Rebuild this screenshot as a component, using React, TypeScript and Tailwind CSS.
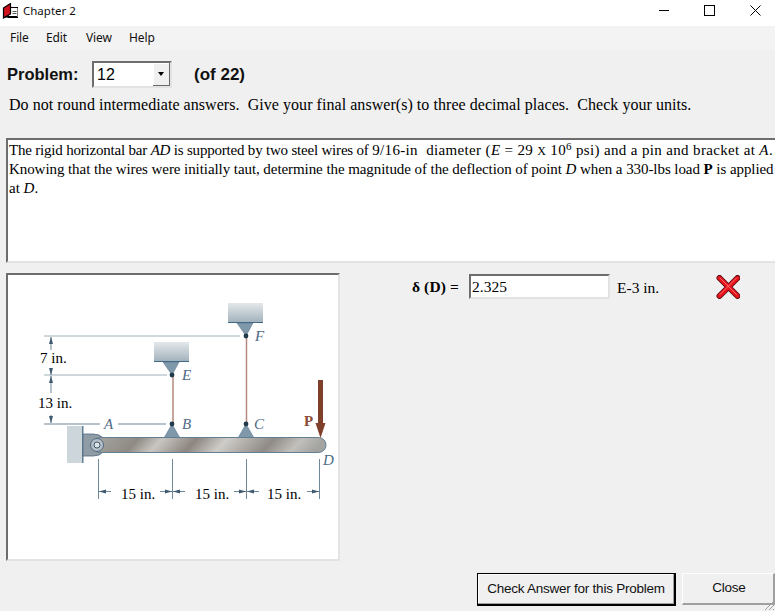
import React from "react";

const serif = "[font-family:'Liberation_Serif',serif]";

function Diagram() {
  const serifFont = "'Liberation Serif', serif";
  const line = "#9fb0b8";
  const dim = "#6f8797";
  const label = "#4f6a85";
  const Block = ({ x, y }: { x: number; y: number }) => (
    <g>
      <rect x={x} y={y} width={35} height={19} fill="url(#blk)" />
      <rect x={x} y={y + 19} width={35} height={1} fill="#3f6a85" />
      <polygon points={`${x + 9},${y + 20} ${x + 25},${y + 20} ${x + 18},${y + 33}`} fill="#7f98aa" stroke="#4f6a85" strokeWidth={0.5} />
      <circle cx={x + 18} cy={y + 33} r={2.4} fill="#1e3a4c" />
    </g>
  );
  const Base = ({ x }: { x: number }) => (
    <g>
      <polygon points={`${x},424 ${x - 8},438 ${x + 8},438`} fill="#7f98aa" stroke="#4f6a85" strokeWidth={0.5} />
      <circle cx={x} cy={424} r={2.4} fill="#1e3a4c" />
    </g>
  );
  const ArrowH = ({ x, dir }: { x: number; dir: 1 | -1 }) => (
    <g>
      <line x1={x} y1={491.5} x2={x + dir * 12} y2={491.5} stroke={dim} strokeWidth={1} />
      <polygon points={`${x},491.5 ${x + dir * 7},489.5 ${x + dir * 7},493.5`} fill="#3f5a70" />
    </g>
  );
  const ArrowV = ({ y, dir, len }: { y: number; dir: 1 | -1; len: number }) => (
    <g>
      <line x1={51} y1={y} x2={51} y2={y + dir * len} stroke={dim} strokeWidth={1} />
      <polygon points={`51,${y} 49,${y + dir * 7} 53,${y + dir * 7}`} fill="#3f5a70" />
    </g>
  );
  return (
    <svg viewBox="8 275 330 284" className="block w-[330px] h-[284px]">
      <defs>
        <linearGradient id="blk" x1="0" y1="0" x2="0" y2="1">
          <stop offset="0" stopColor="#e4e8ea" />
          <stop offset="1" stopColor="#a3b3bd" />
        </linearGradient>
        <linearGradient id="bar" x1="0" y1="0" x2="1" y2="0.06">
          <stop offset="0" stopColor="#a8a8a4" />
          <stop offset="0.2" stopColor="#8f8a84" />
          <stop offset="0.3" stopColor="#c9c6c1" />
          <stop offset="0.45" stopColor="#8d8580" />
          <stop offset="0.58" stopColor="#cfcdc9" />
          <stop offset="0.78" stopColor="#8f8a86" />
          <stop offset="0.9" stopColor="#c2c0bc" />
          <stop offset="1" stopColor="#a3a3a0" />
        </linearGradient>
      </defs>

      <line x1={44} y1={336} x2={240} y2={336} stroke={line} strokeWidth={1} />
      <line x1={44} y1={375} x2={167} y2={375} stroke={line} strokeWidth={1} />
      <line x1={44} y1={424} x2={100} y2={424} stroke={dim} strokeWidth={1} />
      <line x1={118} y1={424} x2={166} y2={424} stroke={dim} strokeWidth={1} />

      <ArrowV y={337} dir={1} len={13} />
      <ArrowV y={375} dir={-1} len={5} />
      <ArrowV y={376} dir={1} len={17} />
      <ArrowV y={423} dir={-1} len={8} />

      <text x={40} y={363} fontFamily={serifFont} fontSize={15} fill="#000">7 in.</text>
      <text x={38} y={408} fontFamily={serifFont} fontSize={15} fill="#000">13 in.</text>

      <line x1={173} y1={375} x2={173} y2={424} stroke="#b58a7c" strokeWidth={1.5} />
      <line x1={246.5} y1={336} x2={246.5} y2={424} stroke="#b58a7c" strokeWidth={1.5} />

      <Block x={154} y={342} />
      <Block x={228} y={303} />
      <Base x={172} />
      <Base x={246} />

      <rect x={67} y={426} width={16} height={37} fill="#cdd6da" />
      <rect x={82} y={426} width={1.5} height={37} fill="#5f8096" />
      <path d="M83 434 H93 Q100 434 103 438 V452 Q100 456 93 456 H83 Z" fill="#8f9ca5" stroke="#4f6a85" strokeWidth={0.8} />
      <rect x={93} y={437.5} width={233} height={15} rx={7.5} fill="url(#bar)" stroke="#5f7f95" strokeWidth={1} />
      <circle cx={97} cy={445} r={6.5} fill="#b4bec4" stroke="#4f6a85" strokeWidth={1} />
      <circle cx={97} cy={445} r={3} fill="#dfe4e6" stroke="#3f5a70" strokeWidth={1} />

      <rect x={318} y={380} width={5} height={43} fill="#7e3f2b" />
      <polygon points="315.5,423 325.5,423 320.5,438" fill="#7e3f2b" />

      <text x={304} y={426} fontFamily={serifFont} fontSize={15} fontWeight={700} fill="#8a4a36">P</text>
      <g fontFamily={serifFont} fontSize={15} fontStyle="italic" fill={label}>
        <text x={104} y={429}>A</text>
        <text x={182} y={429}>B</text>
        <text x={254} y={429}>C</text>
        <text x={182} y={380}>E</text>
        <text x={255} y={341}>F</text>
        <text x={323} y={465}>D</text>
      </g>

      {[98.5, 172.5, 246.5, 319.5].map((x) => (
        <line key={x} x1={x} y1={459} x2={x} y2={499} stroke={dim} strokeWidth={1} />
      ))}
      <ArrowH x={99} dir={1} />
      <ArrowH x={172} dir={-1} />
      <ArrowH x={173} dir={1} />
      <ArrowH x={246} dir={-1} />
      <ArrowH x={247} dir={1} />
      <ArrowH x={319} dir={-1} />
      <g fontFamily={serifFont} fontSize={15} fill="#000">
        <text x={121} y={499}>15 in.</text>
        <text x={195} y={499}>15 in.</text>
        <text x={267} y={499}>15 in.</text>
      </g>
    </svg>
  );
}

export default function App() {
  return (
    <div className="relative w-[775px] h-[611px] overflow-hidden bg-[#f0f0f0] flex flex-col text-black">
      <div className="h-[26px] bg-white flex items-center justify-between shrink-0">
        <div className="flex items-center pl-[2px] gap-[5px] pb-[4px]">
          <svg width="16" height="16" viewBox="0 0 16 16" className="block">
            <rect x="6" y="4.5" width="10" height="10" fill="#fff" stroke="#000" />
            <path d="M1.5 5 L8.5 0.5 V11 L1.5 15 Z" fill="#d0101c" stroke="#000" strokeWidth="1.2" />
            <rect x="10.5" y="8" width="4" height="1" fill="#555" />
            <rect x="10.5" y="10" width="4" height="1" fill="#555" />
            <rect x="3" y="13" width="12" height="1.5" fill="#000" />
          </svg>
          <span className="text-[11.5px] [font-family:'Noto_Sans',sans-serif] text-[#111]">Chapter 2</span>
        </div>
        <div className="flex items-center gap-[25px] pr-[10px] pb-[6px]">
          <div className="w-[20px] flex justify-start pl-[4px]"><div className="w-[10px] h-px bg-black" /></div>
          <div className="w-[20px] flex justify-start pl-[4px]"><div className="w-[11px] h-[11px] border border-black" /></div>
          <div className="w-[20px] flex justify-start pl-[5px]">
            <svg width="11" height="11" viewBox="0 0 11 11"><path d="M0.5 0.5 L10.5 10.5 M10.5 0.5 L0.5 10.5" stroke="#000" strokeWidth="1" /></svg>
          </div>
        </div>
      </div>

      <div className="h-[24px] flex items-center pl-[10px] text-[12px] tracking-[-0.1px] [font-family:'Noto_Sans',sans-serif] text-[#111] shrink-0 bg-[#f3f3f3]">
        <span className="w-[36px]">File</span>
        <span className="w-[40px]">Edit</span>
        <span className="w-[43px]">View</span>
        <span>Help</span>
      </div>

      <div className="flex items-center h-[27px] mt-[11px] pl-[7px] [font-family:'Liberation_Sans',sans-serif] shrink-0">
        <span className="w-[85px] text-[16.5px] font-bold text-[#111]">Problem:</span>
        <div className="w-[80px] h-[27px] flex items-center border-2 border-t-[#6d6d6d] border-l-[#6d6d6d] border-r-[#e3e3e3] border-b-[#e3e3e3] bg-white">
          <span className="flex-1 pl-[3px] text-[16px]">12</span>
          <div className="w-[17px] h-[23px] bg-[#f0f0f0] border-r border-b border-[#696969] shadow-[inset_1px_1px_0_#fff] flex items-center justify-center">
            <div className="w-0 h-0 border-l-[3px] border-r-[3px] border-t-[4px] border-l-transparent border-r-transparent border-t-black" />
          </div>
        </div>
        <span className="ml-[22px] text-[17px] font-bold text-[#111]">(of 22)</span>
      </div>

      <div className={`mt-[7px] pl-[9px] h-[20px] leading-[20px] text-[16px] tracking-[0.05px] whitespace-pre shrink-0 ${serif}`}>
        Do not round intermediate answers.  Give your final answer(s) to three decimal places.  Check your units.
      </div>

      <div className={`mt-[23px] ml-[6px] h-[125px] border-2 border-t-[#6d6d6d] border-l-[#6d6d6d] border-r-0 border-b-[#e3e3e3] bg-white pl-[1px] pt-[1px] text-[15px] leading-[19px] whitespace-nowrap overflow-hidden shrink-0 ${serif}`}>
        <div className="h-[19px]">
          <span className="tracking-[-0.2px]">The rigid horizontal bar <i>AD</i> is supported by two steel wires of </span>
          <span className="tracking-[0.35px]">9/16-in&nbsp; diameter (<i>E</i> = 29 <span className="text-[12px]">X</span> 10<sup className="text-[11px] leading-none">6</sup> psi) and a pin and bracket at <i>A</i>.</span>
        </div>
        <div className="h-[19px] tracking-[-0.07px]">Knowing that the wires were initially taut, determine the magnitude of the deflection of point <i>D</i> when a 330-lbs load <b>P</b> is applied</div>
        <div className="h-[19px]">at <i>D</i>.</div>
      </div>

      <div className="flex mt-[10px] ml-[6px] items-start shrink-0">
        <div className="w-[334px] h-[288px] border-2 border-t-[#6d6d6d] border-l-[#6d6d6d] border-r-[#e3e3e3] border-b-[#e3e3e3] bg-white overflow-hidden">
          <Diagram />
        </div>
        <div className={`flex items-center ml-[72px] mt-[1px] h-[25px] text-[15px] ${serif}`}>
          <span className="font-bold w-[57px] text-[15.5px] tracking-[0.1px]">δ (D) =</span>
          <div className="w-[141px] h-[25px] border-2 border-t-[#6d6d6d] border-l-[#6d6d6d] border-r-[#e3e3e3] border-b-[#e3e3e3] bg-white pl-[1px] leading-[21px] text-[15.5px]">2.325</div>
          <span className="ml-[7px] mt-[3px] text-[15.5px]">E-3 in.</span>
          <svg width="24" height="24" viewBox="0 0 24 24" className="ml-[57px]">
            <path d="M3.5 3 L21.5 21 M21.5 3 L3.5 21" stroke="#5e1014" strokeWidth="6" strokeLinecap="round" />
            <path d="M3.5 3 L21.5 21 M21.5 3 L3.5 21" stroke="#e8141c" strokeWidth="4" strokeLinecap="round" />
            <path d="M4 3 L20.5 19.5 M20.5 3 L4 19.5" stroke="#ff6b70" strokeWidth="1" strokeLinecap="round" />
          </svg>
        </div>
      </div>

      <div className="flex justify-end mt-[12px] pr-0 [font-family:'Liberation_Sans',sans-serif] text-[13.5px] tracking-[-0.25px] text-[#111] shrink-0">
        <button className="w-[199px] h-[33px] border border-black border-b-2 border-r-2 bg-[#f0f0f0] shadow-[inset_-1px_-1px_0_#a0a0a0,inset_1px_1px_0_#fff]">Check Answer for this Problem</button>
        <button className="ml-[6px] w-[93px] h-[32px] border-t border-l border-white border-r-2 border-b-2 border-r-[#a0a0a0] border-b-[#a0a0a0] bg-[#f0f0f0] pl-[2px]">Close</button>
      </div>

      <svg width="14" height="14" viewBox="0 0 14 14" className="absolute right-0 bottom-0">
        <path d="M13 4 L4 13 M13 8 L8 13 M13 12 L12 13" stroke="#a0a0a0" strokeWidth="1" />
      </svg>
    </div>
  );
}
